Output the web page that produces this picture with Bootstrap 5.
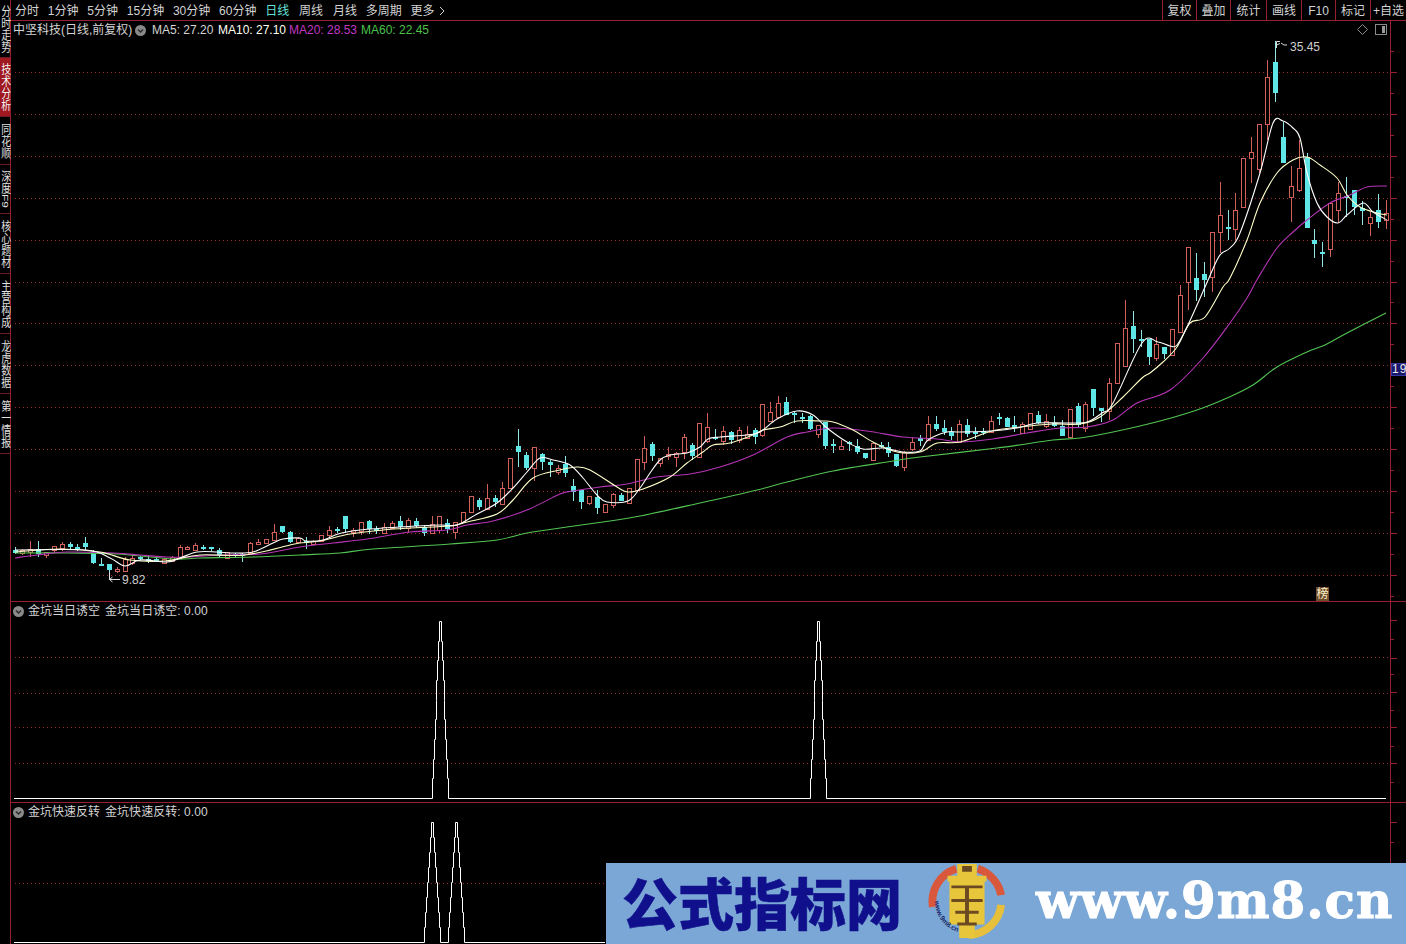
<!DOCTYPE html>
<html lang="zh-CN">
<head>
<meta charset="utf-8">
<title>中坚科技 日线</title>
<link href="https://cdn.jsdelivr.net/npm/bootstrap@5.3.0/dist/css/bootstrap.min.css" rel="stylesheet">
<style>
:root{--grid-red:#962030;}
html,body{background:#000;margin:0;}
body{font-family:"Liberation Sans","Noto Sans CJK SC",sans-serif;font-size:12px;color:#d4d4d4;line-height:1;}
.term{width:1406px;height:944px;overflow:hidden;background:#000;}
.top-strip{height:21px;border-bottom:1px solid var(--grid-red);padding-left:4px;}
.period-list{gap:8.800px;padding-top:1px;}
.period-on{color:#66e0d8;}
.period-shift{margin-left:1px;}
.tool-cell{border-left:1px solid var(--grid-red);padding-top:1px;white-space:nowrap;}
.cell-34{width:34px;}
.cell-35{width:35px;}
.cell-36{width:36px;}
.side-rail{width:11px;border-right:1px solid var(--grid-red);}
.rail-tab{width:10px;border-bottom:1px solid #6e1a24;color:#e0e0e0;}
.rail-text{writing-mode:vertical-rl;font-size:12px;line-height:12px;width:12px;flex:none;white-space:nowrap;transform:scaleX(.82);}
.rail-tab-on{background:#a01820;color:#f4f4f4;}
.tab-48{height:48px;}
.tab-49{height:49px;}
.tab-58{height:58px;}
.tab-59{height:59px;}
.tab-60{height:60px;}
.pane-one{height:581px;border-bottom:1px solid var(--grid-red);}
.pane-two{height:201px;border-bottom:1px solid var(--grid-red);}
.plot-area{width:1380px;border-right:1px solid var(--grid-red);}
.axis-strip{width:15px;}
.plot-svg{display:block;width:100%;height:100%;}
.pane-head{left:2px;top:3px;white-space:nowrap;}
.head-value{margin-left:5px;letter-spacing:.05px;}
.legend-row{left:2px;top:3px;white-space:nowrap;}
.lg-name{width:122px;}
.lg-icon{margin-right:6px;}
.lg-66{width:66px;}
.lg-71{width:71px;}
.lg-72{width:72px;}
.tone-pale{color:#fffff0;}
.tone-pink{color:#c03ac0;}
.tone-green{color:#4cc24c;}
.dot-icon{width:11px;height:11px;flex:none;}
.price-flag{background:#18186c;border:1px solid #3838a0;color:#e8e8e8;right:0;top:342px;width:15px;height:13px;font-size:12px;letter-spacing:1px;text-align:center;line-height:11px;}
.board-tag{background:#6e4c2c;color:#fff2c8;right:61px;bottom:0;width:13px;height:14px;font-size:12px;line-height:14px;text-align:center;}
.top-tools{right:3px;top:3px;gap:7px;}
.promo{position:absolute;left:606px;top:863px;width:800px;height:81px;background:#7ba7d6;padding-bottom:5px;}
.promo-cn{font-family:"Noto Sans CJK SC",sans-serif;font-weight:900;font-size:56px;line-height:1;color:#10108c;-webkit-text-stroke:.5px #10108c;margin-left:16px;width:280px;white-space:nowrap;}
.promo-logo{width:78px;height:78px;margin-left:26px;flex:none;}
.promo-url{font-family:"DejaVu Serif",serif;font-weight:700;font-size:50px;line-height:1;color:#fff;-webkit-text-stroke:1px #fff;margin-left:30px;white-space:nowrap;letter-spacing:.9px;}
</style>
</head>
<body>
<div class="term d-flex position-relative">
  <div class="side-rail flex-shrink-0">
    <div class="rail-tab tab-58 d-flex align-items-center justify-content-center"><span class="rail-text">分时走势</span></div>
    <div class="rail-tab rail-tab-on tab-59 d-flex align-items-center justify-content-center"><span class="rail-text">技术分析</span></div>
    <div class="rail-tab tab-48 d-flex align-items-center justify-content-center"><span class="rail-text">同花顺</span></div>
    <div class="rail-tab tab-49 d-flex align-items-center justify-content-center"><span class="rail-text">深度F9</span></div>
    <div class="rail-tab tab-60 d-flex align-items-center justify-content-center"><span class="rail-text">核心题材</span></div>
    <div class="rail-tab tab-60 d-flex align-items-center justify-content-center"><span class="rail-text">主营构成</span></div>
    <div class="rail-tab tab-60 d-flex align-items-center justify-content-center"><span class="rail-text">龙虎数据</span></div>
    <div class="rail-tab tab-60 d-flex align-items-center justify-content-center"><span class="rail-text">第一情报</span></div>
  </div>
  <div class="flex-grow-1 d-flex flex-column">
    <div class="top-strip d-flex justify-content-between align-items-stretch flex-shrink-0">
      <div class="period-list d-flex align-items-center">
        <span>分时</span><span>1分钟</span><span>5分钟</span><span>15分钟</span><span>30分钟</span><span>60分钟</span><span class="period-on">日线</span><span class="period-shift">周线</span><span class="period-shift">月线</span><span>多周期</span>
        <span class="d-inline-flex align-items-center gap-1">更多<svg width="6" height="10" viewBox="0 0 6 10"><path d="M1 1l4 4-4 4" fill="none" stroke="#d4d4d4"/></svg></span>
      </div>
      <div class="d-flex">
        <div class="tool-cell cell-34 d-flex align-items-center justify-content-center">复权</div>
        <div class="tool-cell cell-34 d-flex align-items-center justify-content-center">叠加</div>
        <div class="tool-cell cell-36 d-flex align-items-center justify-content-center">统计</div>
        <div class="tool-cell cell-35 d-flex align-items-center justify-content-center">画线</div>
        <div class="tool-cell cell-34 d-flex align-items-center justify-content-center">F10</div>
        <div class="tool-cell cell-35 d-flex align-items-center justify-content-center">标记</div>
        <div class="tool-cell cell-36 d-flex align-items-center justify-content-center">+自选</div>
      </div>
    </div>
    <div class="pane-one d-flex flex-shrink-0">
      <div class="plot-area position-relative">
        <svg id="plot1" class="plot-svg" viewBox="11 21 1379 580"></svg>
        <div class="legend-row position-absolute d-flex align-items-center">
          <span class="lg-name">中坚科技(日线,前复权)</span>
          <svg class="dot-icon lg-icon" viewBox="0 0 11 11"><circle cx="5.500" cy="5.500" r="5.500" fill="#8a8a8a"/><path d="M3 4.500l2.500 2.500 2.500-2.500" fill="none" stroke="#2c2c2c" stroke-width="1.500"/></svg>
          <span class="lg-66">MA5: 27.20</span>
          <span class="lg-71 tone-pale">MA10: 27.10</span>
          <span class="lg-72 tone-pink">MA20: 28.53</span>
          <span class="tone-green">MA60: 22.45</span>
        </div>
        <div class="top-tools position-absolute d-flex align-items-center">
          <svg width="11" height="11" viewBox="0 0 11 11"><path d="M5.500 .5l5 5-5 5-5-5z" fill="none" stroke="#8a8a8a"/></svg>
          <svg width="12" height="11" viewBox="0 0 12 11"><rect x=".5" y=".5" width="11" height="10" fill="none" stroke="#8a8a8a"/><rect x="7" y="2" width="3" height="7" fill="#9a9a9a"/></svg>
        </div>
        <div class="board-tag position-absolute">榜</div>
      </div>
      <div class="axis-strip position-relative"><svg id="axis1" class="plot-svg" viewBox="1391 21 15 580"></svg><div class="price-flag position-absolute">19</div></div>
    </div>
    <div class="pane-two d-flex flex-shrink-0">
      <div class="plot-area position-relative">
        <svg id="plot2" class="plot-svg" viewBox="11 602 1379 200"></svg>
        <div class="pane-head position-absolute d-flex align-items-center">
          <svg class="dot-icon" viewBox="0 0 11 11"><circle cx="5.500" cy="5.500" r="5.500" fill="#8a8a8a"/><path d="M3 4.500l2.500 2.500 2.500-2.500" fill="none" stroke="#2c2c2c" stroke-width="1.500"/></svg>
          <span class="ms-1">金坑当日诱空</span><span class="head-value">金坑当日诱空: 0.00</span>
        </div>
      </div>
      <div class="axis-strip"><svg id="axis2" class="plot-svg" viewBox="1391 602 15 200"></svg></div>
    </div>
    <div class="flex-grow-1 d-flex">
      <div class="plot-area position-relative">
        <svg id="plot3" class="plot-svg" viewBox="11 803 1379 141"></svg>
        <div class="pane-head position-absolute d-flex align-items-center">
          <svg class="dot-icon" viewBox="0 0 11 11"><circle cx="5.500" cy="5.500" r="5.500" fill="#8a8a8a"/><path d="M3 4.500l2.500 2.500 2.500-2.500" fill="none" stroke="#2c2c2c" stroke-width="1.500"/></svg>
          <span class="ms-1">金坑快速反转</span><span class="head-value">金坑快速反转: 0.00</span>
        </div>
      </div>
      <div class="axis-strip"><svg id="axis3" class="plot-svg" viewBox="1391 803 15 141"></svg></div>
    </div>
  </div>
  <div class="promo d-flex align-items-center">
    <div class="promo-cn">公式指标网</div>
    <svg class="promo-logo" viewBox="0 0 80 80">
      <defs><path id="logoArc" d="M7 40a33 33 0 0 0 33 33"/></defs>
      <path d="M5 46A35 35 0 0 1 29 7" fill="none" stroke="#d9583c" stroke-width="8"/>
      <path d="M51 7A35 35 0 0 1 75 34" fill="none" stroke="#d9583c" stroke-width="8"/>
      <path d="M75 44A35 35 0 0 1 42 75" fill="none" stroke="#e6c03c" stroke-width="8"/>
      <path d="M30 2h20v12h10v6H58v44H48v14H32V64H22V20H20v-6h10z" fill="#e8c63c"/>
      <path d="M35 4h10v6H35zM24 24h32v3H24zM24 38h32v3H24zM38 24h4v40h-4zM28 50h24v3H28zM30 62h20v3H30z" fill="#6b4a22"/>
      <text font-family="Liberation Sans" font-size="7" font-weight="700" fill="#1a2a6a"><textPath href="#logoArc">www.9m8.cn</textPath></text>
    </svg>
    <div class="promo-url">www.9m8.cn</div>
  </div>
</div>
<script src="https://cdn.jsdelivr.net/npm/bootstrap@5.3.0/dist/js/bootstrap.bundle.min.js"></script>
<script>
const segs=[
[15,298,`d 550 553 547 554|u 550 553 549 555|u 549 552 541 557|d 549 554 541 557|u 552 555 552 558|u 546 550 546 553|u 544 548 542 551|d 544 547 542 549|d 547 549 544 551|d 543 547 537 550|d 552 563 550 564|d 564 566 558 566|d 564 570 564 580|u 569 571 567 573|u 559 571 557 571|u 558 563 555 565|d 557 559 556 561|d 559 561 556 563|d 559 561 557 562|u 559 563 558 564|u 557 561 556 562|u 547 557 545 558|u 547 549 546 550|u 545 550 543 551|d 547 549 545 550|d 547 549 547 551|d 550 556 548 557|u 552 558 552 559|d 554 556 553 557|d 554 556 553 562|u 543 553 542 554|u 542 544 539 545|u 539 543 539 544|u 532 540 524 540|d 526 532 526 533|d 532 542 531 543|u 538 542 537 543`],
[306,629,`d 541 543 537 549|u 541 544 540 545|u 535 541 535 542|u 530 535 526 537|d 529 531 527 533|d 516 529 516 533|u 530 532 528 537|u 522 531 522 535|d 521 529 520 534|d 529 531 526 534|u 527 533 523 534|u 523 528 521 529|d 521 527 516 530|u 520 528 518 533|d 521 526 518 528|d 527 533 525 536|u 524 533 516 534|u 516 530 516 533|d 523 529 519 533|u 522 532 522 539|u 512 522 512 523|u 496 512 496 513|d 500 507 498 510|u 498 509 484 510|d 498 502 495 507|u 488 504 482 505|u 458 488 458 489|d 446 452 429 467|d 455 468 452 470|u 447 468 447 481|d 454 462 453 470|d 462 465 460 477|u 468 472 465 475|d 464 473 456 477|d 486 492 479 501|d 490 502 490 509|u 496 503 496 505|d 497 508 490 514|u 504 512 504 513|u 494 505 493 508|d 495 501 493 501|u 488 503 488 504`],
[637,1070,`u 459 490 459 490|u 448 462 436 470|d 444 456 442 461|u 458 463 458 467|u 454 456 447 460|u 453 457 452 467|u 437 452 434 459|d 445 456 443 460|u 423 457 423 457|u 427 441 413 443|d 437 439 429 440|u 431 441 426 445|d 432 440 431 444|u 430 440 427 443|u 434 438 426 439|d 430 437 428 444|u 404 435 404 437|u 412 421 402 421|u 403 417 396 417|d 402 415 397 415|d 413 415 411 423|d 417 419 413 423|d 416 429 415 430|u 425 434 425 438|d 422 446 422 449|d 444 446 439 453|u 446 449 440 449|d 442 444 441 451|d 446 452 439 454|d 453 458 453 459|u 443 460 443 460|d 445 447 442 448|d 447 453 442 457|d 454 466 454 467|u 452 467 451 471|u 442 449 437 451|d 438 441 435 446|u 424 440 416 441|d 424 429 416 431|d 428 432 420 435|d 432 436 427 440|u 424 442 420 443|d 425 434 419 437|d 432 434 427 439|d 431 433 428 435|u 421 432 416 432|d 417 419 413 425|d 418 427 417 427|d 425 428 416 432|u 424 433 422 433|u 413 429 413 429|d 415 423 411 424|u 421 426 414 428|d 423 426 416 427|d 426 436 420 436|u 409 437 409 437`],
[1078,1386,`d 406 425 403 427|u 404 428 402 432|d 389 408 389 416|d 408 411 408 422|u 383 411 378 420|u 343 383 343 383|u 328 366 300 366|d 326 339 311 353|d 339 341 330 347|d 339 357 339 365|u 344 358 337 361|d 347 354 347 359|u 329 355 329 355|u 295 332 285 332|u 247 282 247 310|d 278 290 253 301|d 274 280 262 297|u 232 277 232 292|u 215 232 182 253|d 227 229 210 240|u 210 229 193 240|u 158 207 158 207|u 152 158 137 183|u 124 169 124 173|u 77 124 60 140|d 62 93 41 102|d 137 163 122 163|u 186 197 166 222|u 168 190 140 192|d 157 228 153 228|d 240 244 229 258|d 252 254 242 267|u 203 249 203 257|u 193 210 182 223|d 196 198 177 217|d 190 207 190 215|d 208 211 201 225|u 217 223 212 236|d 210 222 194 228|u 213 220 200 229`]];
const maLines={
"#ffffff":"15,550 86,550 110,558 125,566 140,560 167,562 180,558 197,552 217,552 233,553 253,552 273,543 283,539 300,538 306,541 323,540 338,534 360,530 400,527 440,525 457,525 477,514 497,503 513,488 527,472 540,458 553,460 570,465 583,478 597,495 607,502 628,501 640,488 650,473 660,460 670,455 687,453 700,447 708,439 720,437 747,435 760,432 777,419 797,411 813,415 827,428 847,442 863,449 883,448 903,452 920,451 928,440 947,432 960,432 992,431 1017,428 1037,423 1067,423 1087,422 1102,413 1113,403 1142,343 1158,342 1170,346 1177,345 1187,327 1205,287 1217,260 1222,253 1230,248 1240,233 1260,173 1273,123 1283,121 1293,128 1300,138 1307,173 1317,203 1327,217 1338,223 1347,215 1363,203 1373,212 1387,220",
"#ffffc8":"15,552 60,549 100,552 130,560 165,561 200,555 245,555 290,545 300,543 320,541 350,534 383,530 410,528 450,526 467,522 497,514 513,500 533,478 560,470 577,467 590,470 617,487 628,492 643,489 670,477 687,463 703,452 713,445 730,443 753,435 763,430 780,427 797,421 820,421 833,422 853,430 873,442 897,452 920,452 937,443 960,442 992,431 1020,427 1053,424 1080,424 1100,417 1123,397 1142,378 1150,373 1163,362 1177,347 1190,323 1205,317 1223,287 1230,278 1247,240 1260,203 1277,173 1293,160 1307,157 1320,165 1337,178 1347,195 1360,207 1377,213 1387,215",
"#b634b6":"15,558 37,555 67,552 113,553 140,555 167,557 187,557 220,555 260,554 300,547 333,543 367,539 410,532 447,530 467,525 493,521 527,510 560,494 573,491 600,487 627,484 657,477 690,474 720,467 753,455 787,437 807,432 833,428 867,431 903,437 937,439 960,442 993,439 1027,433 1060,428 1087,427 1113,420 1137,403 1170,390 1203,358 1230,323 1247,298 1258,278 1277,248 1293,232 1307,220 1330,203 1350,195 1367,187 1387,186",
"#52c452":"15,553 67,553 117,554 173,559 200,558 253,557 300,555 340,553 373,549 450,544 497,540 527,533 567,527 603,522 640,516 700,503 757,490 787,482 833,471 887,462 920,457 997,448 1053,440 1080,438 1113,432 1160,421 1197,410 1227,398 1253,385 1277,367 1307,352 1325,345 1347,333 1386,313"};
const GRID="#a02830",TICK="#962030",UP="#d0605a",DN="#5fe6e6",DNW="#8fe8e8",LBL="#cfcfcf";
function smooth(s){const p=s.split(" ").map(a=>a.split(",").map(Number));let d=`M${p[0]}`;
 for(let i=0;i<p.length-1;i++){const a=p[Math.max(i-1,0)],b=p[i],c=p[i+1],e=p[Math.min(i+2,p.length-1)];
  const c1=[b[0]+(c[0]-a[0])/6,b[1]+(c[1]-a[1])/6],c2=[c[0]-(e[0]-b[0])/6,c[1]-(e[1]-b[1])/6];
  d+=`C${c1[0].toFixed(1)} ${c1[1].toFixed(1)} ${c2[0].toFixed(1)} ${c2[1].toFixed(1)} ${c[0]} ${c[1]}`;}
 return d;}
function dots(ys){return ys.map(y=>`<line x1="15" x2="1390" y1="${y+.5}" y2="${y+.5}" stroke="${GRID}" stroke-dasharray="1 3"/>`).join("");}
function ticks(longs,shorts){let h="";longs.forEach(y=>h+=`<line x1="1391" x2="1397" y1="${y+.5}" y2="${y+.5}" stroke="${TICK}"/>`);shorts.forEach(y=>h+=`<line x1="1391" x2="1394" y1="${y+.5}" y2="${y+.5}" stroke="${TICK}"/>`);return h;}
/* stair-stepped spike, as the terminal draws it */
function spike(cx,top,base,n){let up="",down="";
 for(let k=0;k<n;k++){const off=Math.round(8*(1-k/n));const y0=Math.round(base-(base-top)*k/n)+.5,y1=Math.round(base-(base-top)*(k+1)/n)+.5;
  up+=`L${cx-off} ${y0}L${cx-off} ${y1}`;down=`L${cx+off} ${y1}L${cx+off} ${y0}`+down;}
 return up+down;}
/* pane 1 */
const ys1=[];for(let k=0;k<13;k++)ys1.push(Math.round(72+41.9*k));
let h1=dots(ys1);
segs.forEach(([x0,x1,str])=>{const cs=str.split("|");cs.forEach((c,i)=>{const [t,a,b,hi,lo]=c.split(" ");const top=+a,bot=+b,H=+hi,L=+lo;
 const x=Math.floor(x0+(x1-x0)*i/(cs.length-1))+.5;
 if(t==="u"){
  if(H<top)h1+=`<line x1="${x}" x2="${x}" y1="${H}" y2="${top}" stroke="${UP}"/>`;
  if(L>bot)h1+=`<line x1="${x}" x2="${x}" y1="${bot}" y2="${L}" stroke="${UP}"/>`;
  h1+=`<rect x="${x-2}" y="${top+.5}" width="4" height="${Math.max(bot-top,1)}" fill="#000" stroke="${UP}"/>`;
 }else{
  h1+=`<line x1="${x}" x2="${x}" y1="${H}" y2="${L}" stroke="${DNW}"/><rect x="${x-2.5}" y="${top}" width="5" height="${Math.max(bot-top,2)}" fill="${DN}"/>`;
 }});});
Object.entries(maLines).reverse().forEach(([col,s])=>{h1+=`<path d="${smooth(s)}" fill="none" stroke="${col}" stroke-width="1.1"/>`;});
h1+=`<path d="M1276.500 48L1276.500 41.500H1280M1276.500 45L1280 43.500M1281 43l3 2 3 0" fill="none" stroke="#dcdcdc"/><text x="1290" y="51" font-size="12" fill="${LBL}">35.45</text>`;
h1+=`<path d="M109.500 572V579.500H120M109.500 579.500l3-2.500M109.500 579.500l3 2.500" fill="none" stroke="#dcdcdc"/><text x="122" y="584" font-size="12" fill="${LBL}">9.82</text>`;
plot1.innerHTML=h1;
const sh1=[];ys1.forEach(y=>sh1.push(y-21));sh1.push(ys1[12]+21);
axis1.innerHTML=ticks(ys1,sh1);
/* pane 2 */
plot2.innerHTML=dots([657,693,727,763])+`<path d="M14 798.500${spike(440.5,621,798,9)}${spike(818.5,621,798,9)}L1386 798.500" fill="none" stroke="#fff"/>`;
axis2.innerHTML=ticks([620,658,692,727,763],[639,674,710,746,782]);
/* pane 3 */
plot3.innerHTML=dots([883])+`<path d="M14 942.500${spike(432.5,822,942,8)}${spike(456.5,822,942,8)}L605 942.500" fill="none" stroke="#fff"/>`;
axis3.innerHTML=ticks([822],[842]);
</script>
</body>
</html>
